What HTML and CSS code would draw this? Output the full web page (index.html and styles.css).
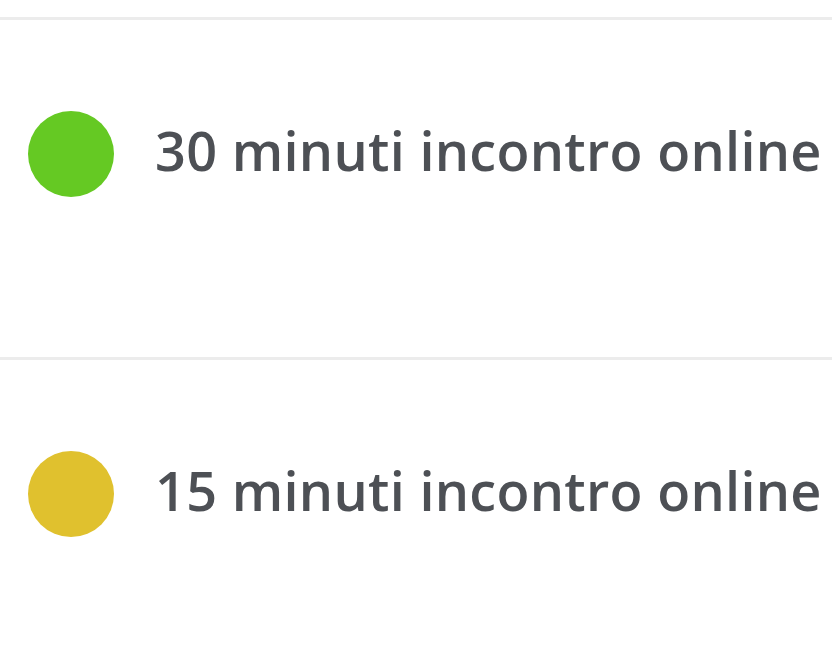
FILE: index.html
```html
<!DOCTYPE html>
<html lang="it">
<head>
    <meta charset="UTF-8">
    <meta name="viewport" content="width=device-width, initial-scale=1.0">
    <title>Tipi di evento</title>
    <link rel="stylesheet" href="styles.css">
</head>
<body>

    <!-- Elenco dei tipi di evento -->
    <div class="top-spacer"></div>

    <div class="event-row">
        <span class="dot dot-green"></span>
        <span class="event-title">30 minuti incontro online</span>
    </div>

    <div class="event-row">
        <span class="dot dot-yellow"></span>
        <span class="event-title">15 minuti incontro online con</span>
    </div>

</body>
</html>
```

FILE: styles.css
```css
body {
    margin: 0;
    background-color: #fff;
    font-family: "Open Sans", "Liberation Sans", sans-serif;
    overflow: hidden;
}
.top-spacer {
    height: 17px;
    border-bottom: 3px solid #ececec;
}
.event-row {
    display: flex;
    align-items: center;
    height: 86px;
    padding: 91px 0 160px 28px;
    border-bottom: 3px solid #ececec;
    white-space: nowrap;
    overflow: hidden;
}
.dot {
    flex: none;
    width: 86px;
    height: 86px;
    border-radius: 50%;
    margin-right: 41px;
}
.dot-green {
    background-color: #65c923;
}
.dot-yellow {
    background-color: #e0c12e;
}
.event-title {
    font-size: 54px;
    font-weight: 600;
    letter-spacing: 0.3px;
    color: #4d5055;
    font-variant-ligatures: none;
    padding-bottom: 8px;
}
```
